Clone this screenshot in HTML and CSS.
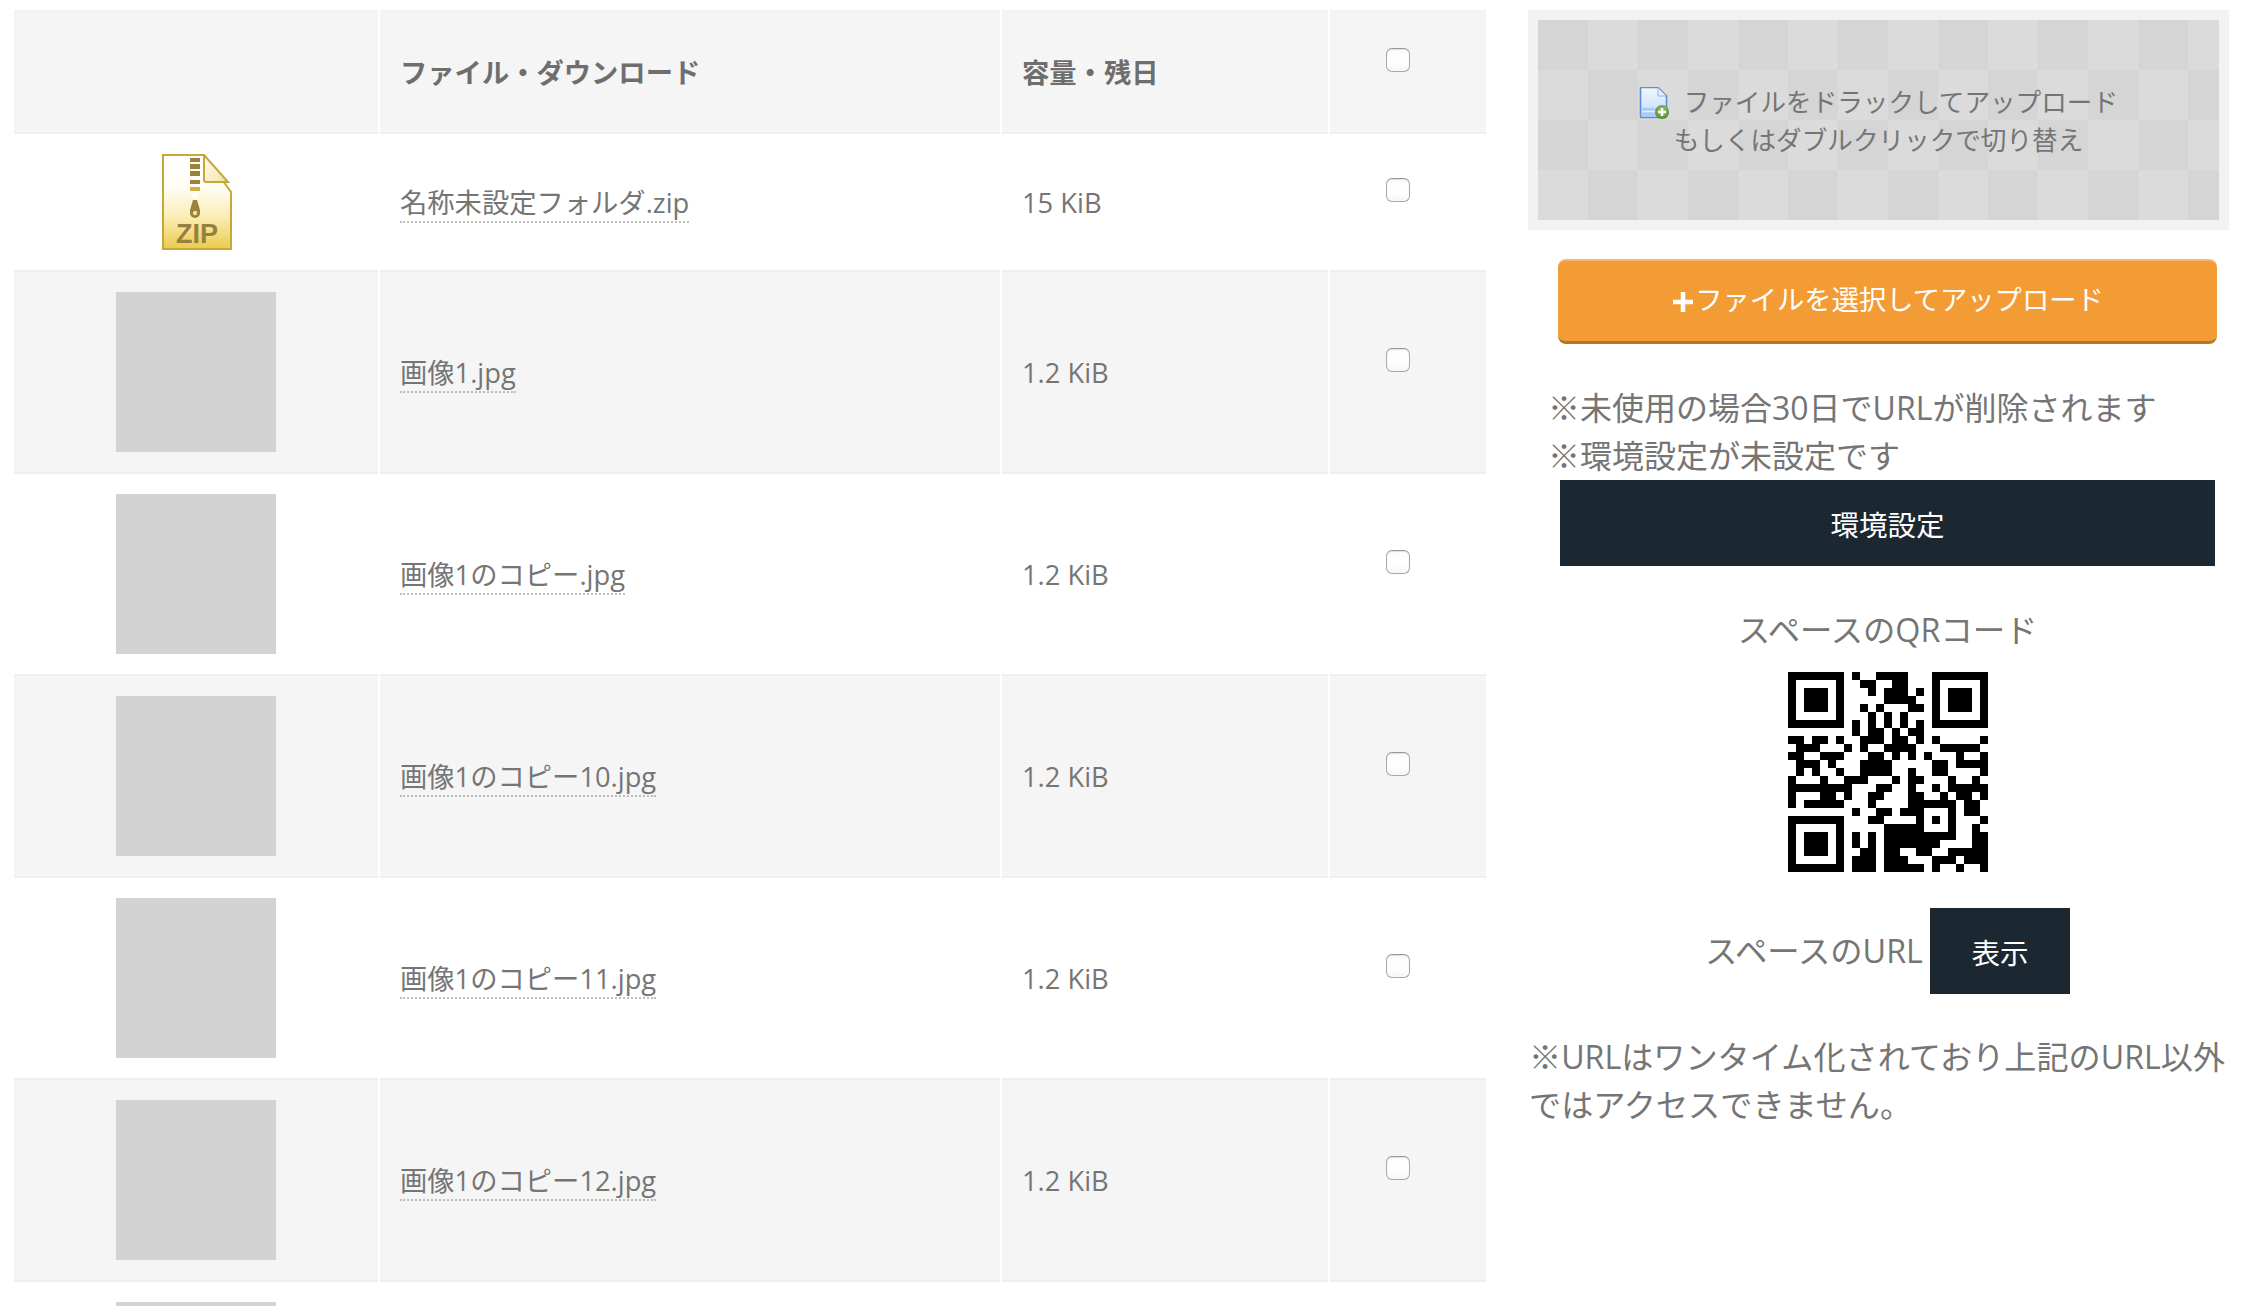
FILE: index.html
```html
<!DOCTYPE html>
<html lang="ja">
<head>
<meta charset="utf-8">
<title>スペース</title>
<link rel="stylesheet" href="styles.css">
</head>
<body>
<div class="page">
  <main class="files">
    <table class="file-table">
      <colgroup><col class="col-thumb"><col class="col-name"><col class="col-size"><col class="col-check"></colgroup>
      <thead>
        <tr class="head-row"><th></th><th>ファイル・ダウンロード</th><th>容量・残日</th><th><input type="checkbox" class="check"></th></tr>
      </thead>
      <tbody>
        <tr class="plain zip-row">
          <td class="thumb">
            <svg class="zip-icon" width="70" height="96" viewBox="0 0 70 96">
              <defs>
                <linearGradient id="zipbg" x1="0" y1="0" x2="0" y2="1">
                  <stop offset="0" stop-color="#ffffff"/><stop offset=".35" stop-color="#fffdf2"/><stop offset=".65" stop-color="#fbeeb8"/><stop offset="1" stop-color="#ecca4c"/>
                </linearGradient>
                <linearGradient id="zipfold" x1="0" y1="0" x2="1" y2="1">
                  <stop offset="0" stop-color="#fffdf0"/><stop offset="1" stop-color="#f3e3a6"/>
                </linearGradient>
              </defs>
              <path d="M1 1H42L69 38V95H1Z" fill="url(#zipbg)" stroke="#c5a83c" stroke-width="2"/>
              <path d="M42 1V26Q42 28 44 28H66L42 1Z" fill="url(#zipfold)" stroke="#c5a83c" stroke-width="2"/>
              <path d="M28 4h10v4H28zM28 10h10v5H28zM28 17h10v5H28zM28 26h10v4H28z" fill="#9c8238"/>
              <path d="M28 33h10v4H28z" fill="#d0b040"/>
              <circle cx="33" cy="42" r="3" fill="#fff"/>
              <path d="M31 46h4l3 10v3a5 5 0 0 1-10 0v-3z" fill="#9c8238"/>
              <circle cx="33" cy="59" r="2.200" fill="#efe0a8"/>
              <text x="35" y="89" class="zip-text">ZIP</text>
            </svg>
          </td>
          <td><a class="file-link">名称未設定フォルダ.zip</a></td><td>15 KiB</td><td><input type="checkbox" class="check"></td>
        </tr>
        <tr class="shaded"><td class="thumb"><div class="placeholder"></div></td><td><a class="file-link">画像1.jpg</a></td><td>1.2 KiB</td><td><input type="checkbox" class="check"></td></tr>
        <tr class="plain"><td class="thumb"><div class="placeholder"></div></td><td><a class="file-link">画像1のコピー.jpg</a></td><td>1.2 KiB</td><td><input type="checkbox" class="check"></td></tr>
        <tr class="shaded"><td class="thumb"><div class="placeholder"></div></td><td><a class="file-link">画像1のコピー10.jpg</a></td><td>1.2 KiB</td><td><input type="checkbox" class="check"></td></tr>
        <tr class="plain"><td class="thumb"><div class="placeholder"></div></td><td><a class="file-link">画像1のコピー11.jpg</a></td><td>1.2 KiB</td><td><input type="checkbox" class="check"></td></tr>
        <tr class="shaded"><td class="thumb"><div class="placeholder"></div></td><td><a class="file-link">画像1のコピー12.jpg</a></td><td>1.2 KiB</td><td><input type="checkbox" class="check"></td></tr>
        <tr class="plain"><td class="thumb"><div class="placeholder"></div></td><td></td><td></td><td></td></tr>
      </tbody>
    </table>
  </main>

  <aside class="side">
    <div class="drop-frame">
      <div class="drop-zone">
        <p class="drop-text">
          <svg class="drop-icon" width="30" height="32" viewBox="0 0 30 32">
            <defs>
              <linearGradient id="docbg" x1="0" y1="0" x2="0" y2="1"><stop offset="0" stop-color="#f2f7fe"/><stop offset="1" stop-color="#c2d9f7"/></linearGradient>
              <radialGradient id="badge" cx=".5" cy=".4" r=".6"><stop offset="0" stop-color="#a8d07a"/><stop offset="1" stop-color="#4f8a2a"/></radialGradient>
            </defs>
            <path d="M1.500 1.500a1 1 0 0 1 1-1H19L27.500 9V29.500a1 1 0 0 1-1 1H2.500a1 1 0 0 1-1-1Z" fill="url(#docbg)" stroke="#5a8fd6" stroke-width="1.600"/>
            <path d="M19 1V9H27" fill="#e8f1fd" stroke="#8cb2e6" stroke-width="1"/>
            <path d="M3 21H26V29H3Z" fill="#a9cbf5"/>
            <path d="M3 24.500H26" stroke="#e4f0fd" stroke-width="1.500"/>
            <circle cx="23" cy="25" r="7" fill="url(#badge)"/>
            <path d="M23 21v8M19 25h8" stroke="#fff" stroke-width="2.400"/>
          </svg>
          <span class="drop-line">ファイルをドラックしてアップロード</span><br>もしくはダブルクリックで切り替え
        </p>
      </div>
    </div>

    <div class="actions">
      <button class="upload-btn" type="button">
        <svg class="plus" width="20" height="20" viewBox="0 0 20 20"><path d="M10 0v20M0 10h20" stroke="#fff" stroke-width="4.500"/></svg>ファイルを選択してアップロード
      </button>

      <div class="notes">
        <p>※未使用の場合30日でURLが削除されます</p>
        <p>※環境設定が未設定です</p>
      </div>
      <button class="dark-btn settings-btn" type="button">環境設定</button>

      <p class="qr-title">スペースのQRコード</p>
      <svg class="qr" width="200" height="200" viewBox="0 0 25 25">
        <path fill-rule="evenodd" d="M0 0h7v7H0zM1 1v5h5V1zM2 2h3v3H2zM18 0h7v7h-7zM19 1v5h5V1zM20 2h3v3h-3zM0 18h7v7H0zM1 19v5h5v-5zM2 20h3v3H2z"/>
        <path stroke="#000" fill="none" d="M8 .5h1M11 .5h4M9 1.500h2M13 1.500h2M10 2.500h1M12 2.500h3M16 2.500h1M12 3.500h4M9 4.500h1M11 4.500h1M15 4.500h2M10 5.500h1M12 5.500h1M14 5.500h1M8 6.500h1M10 6.500h1M12 6.500h1M14 6.500h1M16 6.500h1M8 7.500h1M10 7.500h2M13 7.500h1M15 7.500h2M0 8.500h2M3 8.500h2M6 8.500h1M9 8.500h3M13 8.500h2M16 8.500h1M18 8.500h1M24 8.500h1M1 9.500h3M7 9.500h1M9 9.500h1M12 9.500h4M19 9.500h5M0 10.500h2M4 10.500h3M10 10.500h2M13 10.500h1M15 10.500h1M17 10.500h1M21 10.500h1M24 10.500h1M1 11.500h3M5 11.500h1M9 11.500h4M18 11.500h2M21 11.500h4M1 12.500h1M3 12.500h1M6 12.500h1M9 12.500h4M15 12.500h1M18 12.500h2M24 12.500h1M0 13.500h1M4 13.500h1M7 13.500h3M13 13.500h1M15 13.500h2M20 13.500h1M23 13.500h1M0 14.500h8M11 14.500h2M15 14.500h1M18 14.500h1M20 14.500h5M0 15.500h1M4 15.500h2M7 15.500h1M10 15.500h2M15 15.500h2M19 15.500h1M21 15.500h2M24 15.500h1M0 16.500h1M2 16.500h5M10 16.500h1M15 16.500h6M22 16.500h2M8 17.500h1M11 17.500h2M14 17.500h3M20 17.500h1M22 17.500h2M10 18.500h2M16 18.500h1M18 18.500h1M20 18.500h1M24 18.500h1M12 19.500h5M20 19.500h1M23 19.500h1M8 20.500h1M10 20.500h1M12 20.500h9M23 20.500h2M8 21.500h1M10 21.500h1M12 21.500h7M23 21.500h2M9 22.500h2M12 22.500h2M16 22.500h2M20 22.500h5M8 23.500h3M12 23.500h3M18 23.500h3M22 23.500h3M8 24.500h3M12 24.500h5M18 24.500h1M21 24.500h1M24 24.500h1"/>
      </svg>

      <div class="url-row">
        <span class="url-label">スペースのURL</span>
        <button class="dark-btn show-btn" type="button">表示</button>
      </div>
    </div>

    <p class="url-note">※URLはワンタイム化されており上記のURL以外ではアクセスできません。</p>
  </aside>
</div>
</body>
</html>
```
FILE: styles.css
```css
html, body {
  margin: 0;
  height: 100%;
  overflow: hidden;
  background: #fff;
}
body {
  font-family: "Open Sans", "Noto Sans CJK JP", sans-serif;
  font-size: 27.3px;
  color: #757575;
}
p { margin: 0; }

.page {
  display: flex;
  align-items: flex-start;
  padding: 10px 0 0 12px;
}

.files { flex: none; }
.file-table {
  border-collapse: separate;
  border-spacing: 2px 0;
  table-layout: fixed;
  width: 1476px;
}
.col-thumb { width: 364px; }
.col-name { width: 620px; }
.col-size { width: 326px; }
.col-check { width: 156px; }

th, td {
  padding: 20px;
  vertical-align: middle;
  text-align: left;
  border-top: 2px solid #efefef;
  font-weight: 400;
}
th { font-weight: 700; color: #6e6e6e; height: 77px; background: #f5f5f5; padding-bottom: 23px; }
th:last-child { padding-bottom: 20px; }
td:nth-child(2) { padding-bottom: 23px; }
.head-row th { border-top-color: #f2f2f2; }
.thumb { text-align: center; padding: 20px 0; }
.zip-row .thumb { padding-left: 2px; }
.zip-icon { display: block; margin: 0 auto; }
.zip-text { font: 700 27px "Liberation Sans", sans-serif; fill: #96803f; text-anchor: middle; }
.placeholder { width: 160px; height: 160px; background: #d3d3d3; margin: 0 auto; }
.shaded td { background: #f5f5f5; }
.plain td { background: #fff; }
.file-link { border-bottom: 2px dotted #bdbdbd; }

.check {
  appearance: none;
  display: block;
  width: 24px;
  height: 24px;
  margin: 0 0 24px 36px;
  border: 1px solid #aaa;
  border-top-color: #999;
  border-radius: 6px;
  background: linear-gradient(#fcfcfc, #fff 60%, #f6f6f6);
  box-shadow: inset 0 1px 1px rgba(0,0,0,.12);
}

.side { flex: none; width: 701px; margin-left: 40px; }
.drop-frame { background: #f2f2f2; padding: 10px; }
.drop-zone {
  height: 200px;
  display: flex;
  align-items: center;
  justify-content: center;
  background: repeating-conic-gradient(#dbdbdb 0 25%, #d5d5d5 0 50%) 0 0 / 100px 100px;
}
.drop-text { text-align: center; font-size: 25.6px; line-height: 37.5px; color: #757575; padding-top: 3px; }
.drop-icon { vertical-align: -7px; margin-right: 8px; }

.actions {
  margin: 29px 12px 0 30px;
  display: flex;
  flex-direction: column;
  align-items: center;
}
.upload-btn {
  width: 659px;
  height: 85px;
  padding: 0 0 6px 2px;
  border: 0;
  border-top: 2px solid #f7b56e;
  border-bottom: 3px solid #b5762a;
  border-radius: 8px;
  background: #f39c35;
  color: #fff;
  font: inherit;
}
.plus { vertical-align: -2px; margin-right: 2px; }

.notes { align-self: flex-start; margin: 40px 0 0 -10px; font-size: 32px; line-height: 48px; }
.dark-btn {
  border: 0;
  padding: 0;
  background: #1b2831;
  color: #fff;
  font: inherit;
  font-size: 28.5px;
  height: 86px;
}
.settings-btn { width: 655px; }
.qr-title { font-size: 32.3px; line-height: 48px; margin-top: 39px; }
.qr { display: block; margin-top: 19px; }
.url-row { display: flex; align-items: center; gap: 7px; margin-top: 36px; font-size: 32.3px; }
.url-label { padding-bottom: 4px; }
.show-btn { width: 140px; }

.url-note { margin: 39px 0 0 1px; font-size: 32.15px; line-height: 48px; }
```
